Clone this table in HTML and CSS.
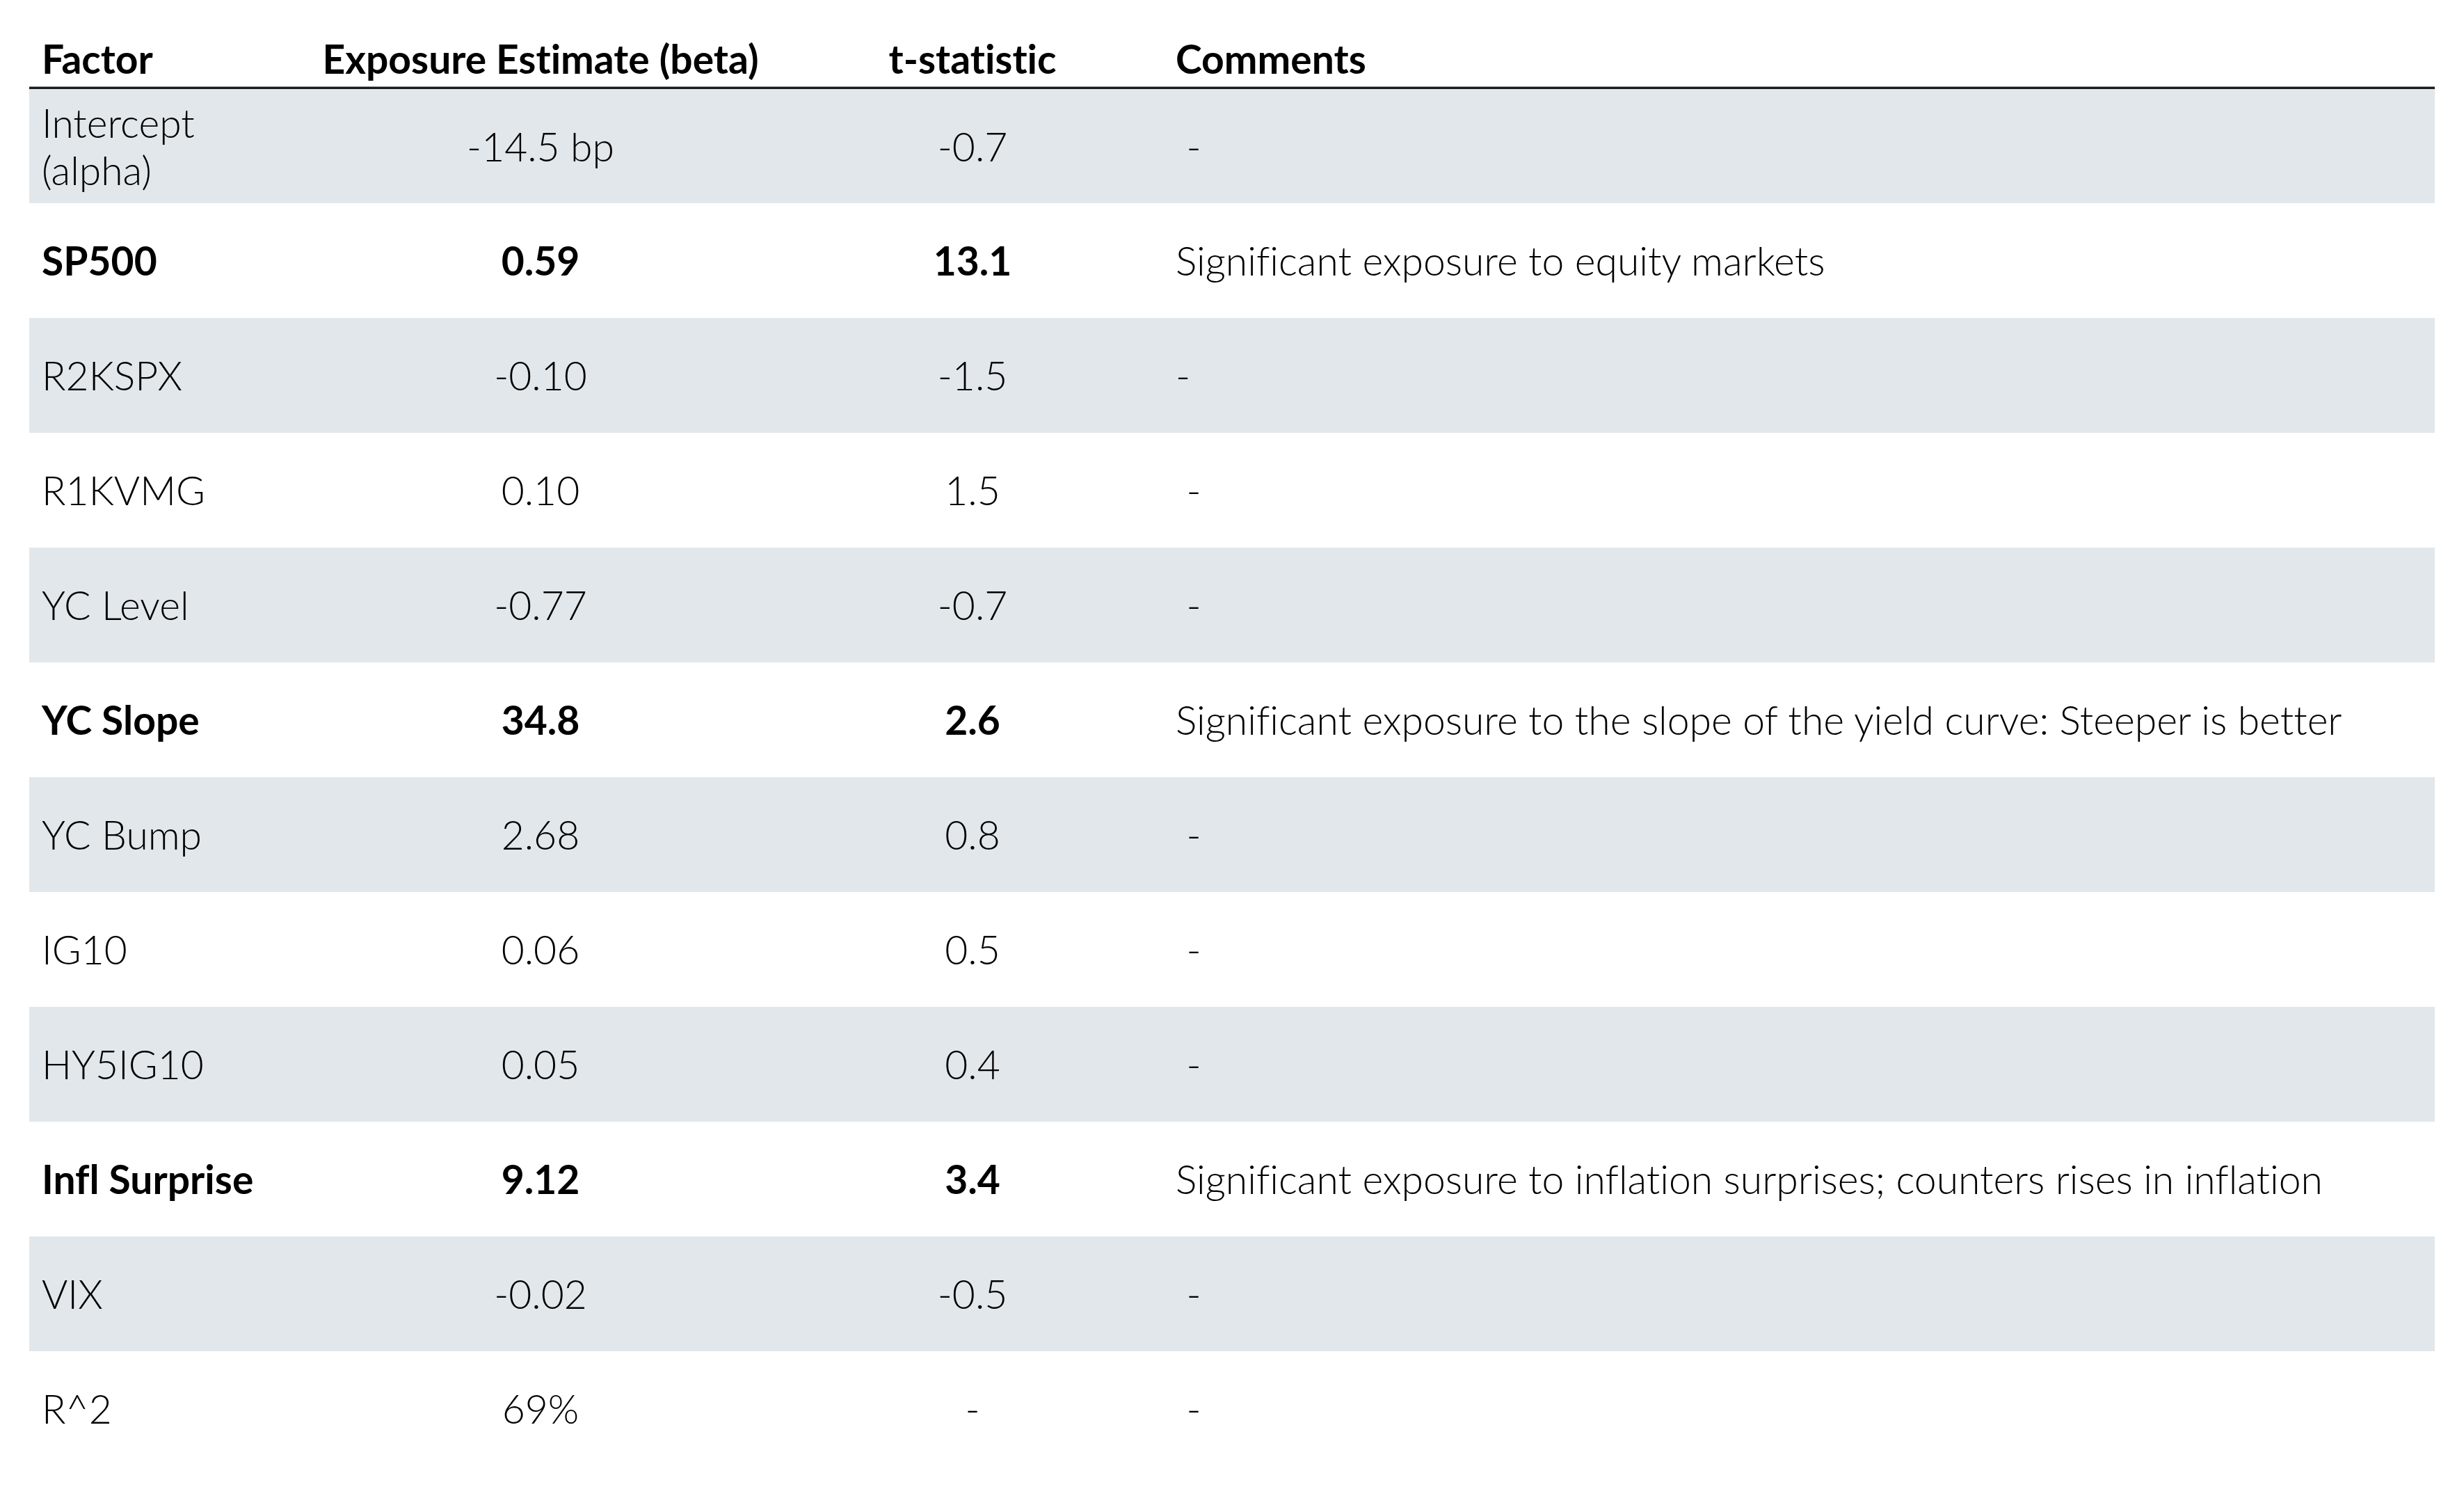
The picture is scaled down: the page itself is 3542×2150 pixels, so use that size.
FILE: index.html
```html
<!DOCTYPE html>
<html lang="en">
<head>
<meta charset="utf-8">
<title>Factor exposures</title>
<link rel="stylesheet" href="styles.css">
</head>
<body>
<table class="factors">
  <colgroup>
    <col class="c-factor">
    <col class="c-beta">
    <col class="c-t">
    <col class="c-comment">
  </colgroup>
  <thead>
    <tr>
      <th class="left">Factor</th>
      <th class="center">Exposure Estimate (beta)</th>
      <th class="center">t-statistic</th>
      <th class="left">Comments</th>
    </tr>
  </thead>
  <tbody>
    <tr class="shade">
      <td class="left">Intercept (alpha)</td>
      <td class="center">-14.5 bp</td>
      <td class="center">-0.7</td>
      <td class="left">&nbsp;-</td>
    </tr>
    <tr class="strong">
      <td class="left">SP500</td>
      <td class="center">0.59</td>
      <td class="center">13.1</td>
      <td class="left comment">Significant exposure to equity markets</td>
    </tr>
    <tr class="shade">
      <td class="left">R2KSPX</td>
      <td class="center">-0.10</td>
      <td class="center">-1.5</td>
      <td class="left">-</td>
    </tr>
    <tr>
      <td class="left">R1KVMG</td>
      <td class="center">0.10</td>
      <td class="center">1.5</td>
      <td class="left">&nbsp;-</td>
    </tr>
    <tr class="shade">
      <td class="left">YC Level</td>
      <td class="center">-0.77</td>
      <td class="center">-0.7</td>
      <td class="left">&nbsp;-</td>
    </tr>
    <tr class="strong">
      <td class="left">YC Slope</td>
      <td class="center">34.8</td>
      <td class="center">2.6</td>
      <td class="left comment">Significant exposure to the slope of the yield curve: Steeper is better</td>
    </tr>
    <tr class="shade">
      <td class="left">YC Bump</td>
      <td class="center">2.68</td>
      <td class="center">0.8</td>
      <td class="left">&nbsp;-</td>
    </tr>
    <tr>
      <td class="left">IG10</td>
      <td class="center">0.06</td>
      <td class="center">0.5</td>
      <td class="left">&nbsp;-</td>
    </tr>
    <tr class="shade">
      <td class="left">HY5IG10</td>
      <td class="center">0.05</td>
      <td class="center">0.4</td>
      <td class="left">&nbsp;-</td>
    </tr>
    <tr class="strong">
      <td class="left">Infl Surprise</td>
      <td class="center">9.12</td>
      <td class="center">3.4</td>
      <td class="left comment">Significant exposure to inflation surprises; counters rises in inflation</td>
    </tr>
    <tr class="shade">
      <td class="left">VIX</td>
      <td class="center">-0.02</td>
      <td class="center">-0.5</td>
      <td class="left">&nbsp;-</td>
    </tr>
    <tr>
      <td class="left">R^2</td>
      <td class="center">69%</td>
      <td class="center">-</td>
      <td class="left">&nbsp;-</td>
    </tr>
  </tbody>
</table>
</body>
</html>
```
FILE: styles.css
```css
html, body {
  margin: 0;
  padding: 0;
  background: #ffffff;
}

body {
  font-family: "Lato", "Open Sans", "Liberation Sans", sans-serif;
  color: #000000;
  font-variant-ligatures: none;
  font-feature-settings: "liga" 0, "clig" 0, "dlig" 0;
}

.factors {
  margin-left: 42px;
  width: 3458px;
  border-collapse: collapse;
  table-layout: fixed;
  font-size: 57px;
  line-height: 68px;
}

.c-factor { width: 388px; }
.c-beta { width: 694px; }
.c-t { width: 548px; }
.c-comment { width: 1828px; }

.factors th {
  font-weight: 700;
  padding: 50px 18px 7px 18px;
  vertical-align: bottom;
  border-bottom: 3px solid #1c1c1c;
  box-shadow: 0 -1px 0 #9a9a9a inset;
}

.factors td {
  font-weight: 300;
  height: 165px;
  box-sizing: border-box;
  padding: 0 18px;
  vertical-align: middle;
}

.left { text-align: left; }
.center { text-align: center; }

.shade td {
  background: #e2e7eb;
}

.strong td {
  font-weight: 700;
}

.strong td.comment {
  font-weight: 300;
}
```
